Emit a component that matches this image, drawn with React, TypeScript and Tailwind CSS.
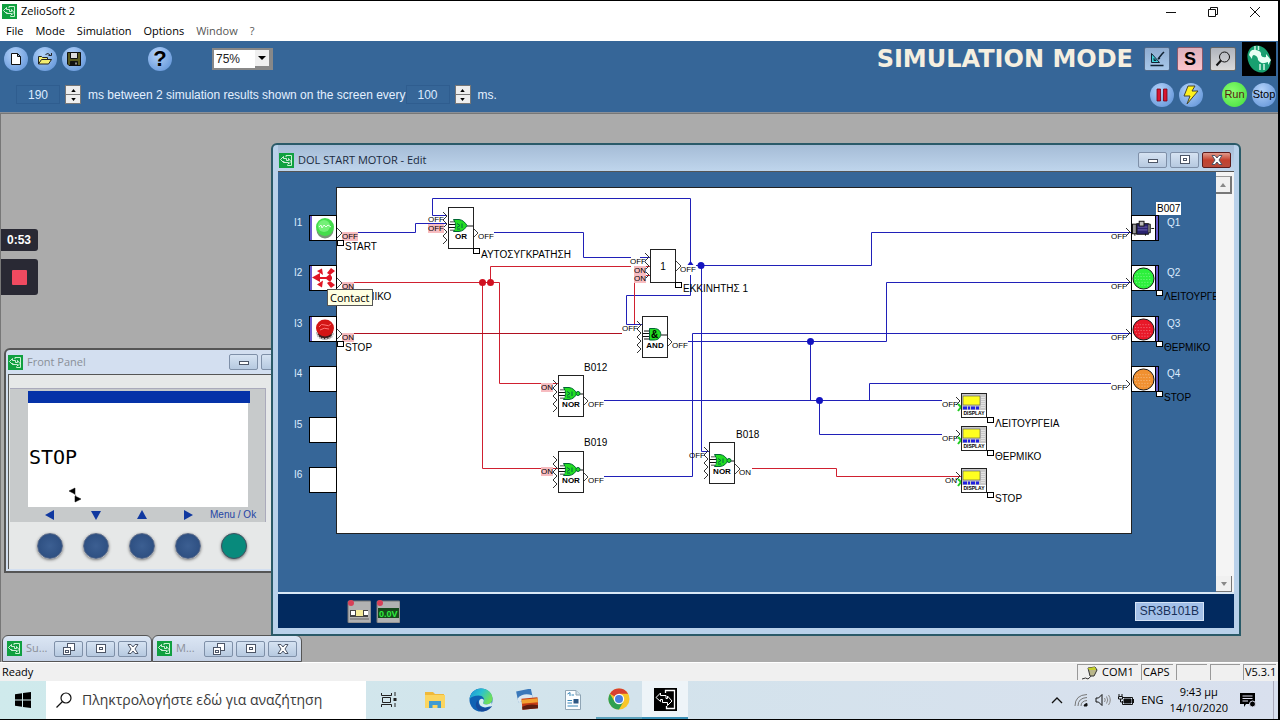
import type { ReactNode } from "react";

const uiFont = "font-['Open_Sans','Noto_Sans',sans-serif]";
const arial = "font-['Liberation_Sans',Arial,sans-serif]";

function Logo() {
  return (
    <svg viewBox="0 0 15 15" className="size-[15px] shrink-0" aria-hidden="true">
      <rect width="15" height="15" fill="#10a040" />
      <path d="M7 4V2.500H12.500V12.500H8.500V11.500" fill="none" stroke="#c8f5d0" strokeWidth="1" />
      <path d="M1.500 6.500L4.500 3.500V5.500H7.500V7.500H9.500V5.500L12 8.500L9.500 11V9.500H5V8.500H4.500V9.500Z" fill="none" stroke="#fff" strokeWidth=".8" />
    </svg>
  );
}

function RoundButton({ label, children, green = false }: { label: string; children: ReactNode; green?: boolean }) {
  return (
    <button
      type="button"
      aria-label={label}
      className={
        green
          ? "flex size-[25px] shrink-0 items-center justify-center rounded-full bg-radial-[at_40%_40%] from-[#8dff70] to-[#3fdc3c] text-[11px] text-[#5a1a10]"
          : "flex size-6 shrink-0 items-center justify-center rounded-full bg-radial-[at_40%_30%] from-[#b4d3fa] to-[#568cd4] text-[11px] text-black"
      }
    >
      {children}
    </button>
  );
}

function Spinner({ label, value }: { label: string; value: string }) {
  return (
    <div className="flex items-center gap-[5px]">
      <input
        aria-label={label}
        defaultValue={value}
        className="h-[19px] w-11 border border-[#2f5d8f] bg-transparent text-center text-xs text-[#dcebff]"
      />
      <span className="flex h-[19px] w-4 flex-col border border-[#777] bg-[#eee]">
        <button type="button" aria-label={`Increase ${label}`} className="flex flex-1 items-center justify-center border-b border-[#777]">
          <svg viewBox="0 0 6 4" className="h-[3px] w-[5px]"><path d="M0 4L3 0L6 4Z" /></svg>
        </button>
        <button type="button" aria-label={`Decrease ${label}`} className="flex flex-1 items-center justify-center">
          <svg viewBox="0 0 6 4" className="h-[3px] w-[5px]"><path d="M0 0L3 4L6 0Z" /></svg>
        </button>
      </span>
    </div>
  );
}

function CaptionIcon({ kind }: { kind: "min" | "max" | "close" | "restore" }) {
  return (
    <svg viewBox="0 0 12 12" className="size-3" fill="#fff" stroke="#4c5566" strokeWidth="1" aria-hidden="true">
      {kind === "min" && <rect x="1.500" y="5.500" width="9" height="3" />}
      {kind === "max" && (
        <>
          <rect x="1.500" y="1.500" width="9" height="8" />
          <rect x="4.500" y="4.500" width="3" height="2" />
        </>
      )}
      {kind === "restore" && (
        <>
          <rect x="4.500" y="0.500" width="7" height="7" />
          <rect x="0.500" y="4.500" width="7" height="7" />
          <rect x="2.500" y="7.500" width="3" height="2" />
        </>
      )}
      {kind === "close" && <path d="M1 1.500H4L6 4L8 1.500H11L8 6L11 10.500H8L6 8L4 10.500H1L4 6Z" />}
    </svg>
  );
}

function CaptionButton({ kind, red = false }: { kind: "min" | "max" | "close" | "restore"; red?: boolean }) {
  return (
    <button
      type="button"
      aria-label={kind}
      className={
        red
          ? "flex h-4 w-[29px] items-center justify-center rounded-[2px] border border-[#5c1a1a] bg-linear-to-b from-[#e09a8c] via-[#c4402c] to-[#b84a3a]"
          : "flex h-4 w-[29px] items-center justify-center rounded-[2px] border border-[#7f90a8] bg-linear-to-b from-[#d6e3f2] to-[#b6c9e0]"
      }
    >
      <CaptionIcon kind={kind} />
    </button>
  );
}

/* The schematic uses sheet units; the origin of the viewport sits at ORIGIN. */
const ORIGIN = { x: 278, y: 172 };
const place = (x: number, y: number) => ({ left: x - ORIGIN.x, top: y - ORIGIN.y });

const BLUE = "#2020b8";
const RED = "#d02030";

const wires: { d: string; c: string }[] = [
  { c: BLUE, d: "M358 232.500H415.500V223.500H447" },
  { c: BLUE, d: "M447 215.500H432.500V198.500H690.500V264" },
  { c: BLUE, d: "M690.500 275V295.500H626.500V324.500H642" },
  { c: BLUE, d: "M494 232.500H583.500V257.500H631M640 257.500H650" },
  { c: RED, d: "M354 282.500H499.500V383.500H542M550 383.500H558" },
  { c: RED, d: "M482.500 282.500V468.500H558" },
  { c: RED, d: "M490.500 282.500V266.500H631M646 266.500H650" },
  { c: "#b01020", d: "M354 333.500H622" },
  { c: RED, d: "M634.500 324V275.500H650" },
  { c: BLUE, d: "M696 265.500H871.500V232.500H1131" },
  { c: BLUE, d: "M701.500 265.500V451.500H709" },
  { c: BLUE, d: "M688 341.500H886.500V282.500H1131" },
  { c: BLUE, d: "M810.500 341.500V400.500" },
  { c: BLUE, d: "M604 400.500H942" },
  { c: BLUE, d: "M819.500 400.500V434.500H942" },
  { c: BLUE, d: "M869.500 400.500V383.500H1111" },
  { c: BLUE, d: "M604 476.500H692.500V333.500H1131" },
  { c: RED, d: "M752 468.500H836.500V476.500H961" },
];

const dots = [
  { x: 482.5, y: 282.5, c: "#d01020" },
  { x: 490.5, y: 282.5, c: "#d01020" },
  { x: 701, y: 265.5, c: "#1414c0" },
  { x: 810.5, y: 341.5, c: "#1414c0" },
  { x: 819.5, y: 400.5, c: "#1414c0" },
];

const arrowsIn: [number, number][] = [
  [448, 216], [448, 224], [448, 232], [448, 240],
  [650, 257], [650, 266], [650, 275],
  [642, 325], [642, 333], [642, 341], [642, 349],
  [558, 384], [558, 392], [558, 400], [558, 408],
  [558, 460], [558, 468], [558, 476], [558, 484],
  [709, 451], [709, 459], [709, 467], [709, 475],
  [961, 401], [961, 434], [961, 476],
  [1131, 232], [1131, 282], [1131, 333], [1131, 384],
];

const arrowsOut: [number, number][] = [
  [337, 232], [337, 282], [337, 333],
  [473, 232], [676, 265], [667, 341], [583, 400], [583, 476], [735, 468],
];

const states: { x: number; y: number; t: "OFF" | "ON"; hot?: boolean }[] = [
  { x: 342, y: 232, t: "OFF", hot: true },
  { x: 342, y: 282, t: "ON", hot: true },
  { x: 342, y: 333, t: "ON", hot: true },
  { x: 428, y: 215, t: "OFF" },
  { x: 428, y: 224, t: "OFF", hot: true },
  { x: 478, y: 232, t: "OFF" },
  { x: 630, y: 257, t: "OFF" },
  { x: 634, y: 266, t: "ON", hot: true },
  { x: 634, y: 274, t: "ON", hot: true },
  { x: 680, y: 265, t: "OFF" },
  { x: 622, y: 324, t: "OFF" },
  { x: 672, y: 341, t: "OFF" },
  { x: 541, y: 383, t: "ON", hot: true },
  { x: 588, y: 400, t: "OFF" },
  { x: 541, y: 467, t: "ON", hot: true },
  { x: 588, y: 476, t: "OFF" },
  { x: 689, y: 451, t: "OFF" },
  { x: 739, y: 468, t: "ON" },
  { x: 942, y: 400, t: "OFF" },
  { x: 942, y: 434, t: "OFF" },
  { x: 945, y: 476, t: "ON" },
  { x: 1111, y: 232, t: "OFF" },
  { x: 1111, y: 282, t: "OFF" },
  { x: 1111, y: 333, t: "OFF" },
  { x: 1111, y: 383, t: "OFF" },
];

const comments = [
  { x: 345, y: 242, t: "START" },
  { x: 345, y: 292, t: "ΘΕΡΜΙΚΟ" },
  { x: 345, y: 343, t: "STOP" },
  { x: 481, y: 250, t: "ΑΥΤΟΣΥΓΚΡΑΤΗΣΗ" },
  { x: 683, y: 284, t: "ΕΚΚΙΝΗΤΗΣ 1" },
  { x: 995, y: 419, t: "ΛΕΙΤΟΥΡΓΕΙΑ" },
  { x: 995, y: 452, t: "ΘΕΡΜΙΚΟ" },
  { x: 995, y: 494, t: "STOP" },
  { x: 1164, y: 292, t: "ΛΕΙΤΟΥΡΓΕΙΑ" },
  { x: 1164, y: 343, t: "ΘΕΡΜΙΚΟ" },
  { x: 1164, y: 393, t: "STOP" },
];

const blockNames = [
  { x: 584, y: 363, t: "B012" },
  { x: 584, y: 438, t: "B019" },
  { x: 736, y: 430, t: "B018" },
];

const gates = [
  { x: 448, y: 207, t: "OR" },
  { x: 642, y: 316, t: "AND" },
  { x: 558, y: 375, t: "NOR" },
  { x: 558, y: 451, t: "NOR" },
  { x: 709, y: 442, t: "NOR" },
];

function Gate({ x, y, t }: { x: number; y: number; t: string }) {
  return (
    <div
      className="absolute flex h-[42px] w-[26px] flex-col items-center border border-[#222] bg-white pt-[10px] text-[8px] leading-[10px] font-bold text-black"
      style={place(x, y)}
    >
      <svg viewBox="0 0 24 14" className="h-[14px] w-6 shrink-0" aria-hidden="true">
        <path d="M1 4H7M0 6.500H7M0 9.500H7M1 12H7M18 8H24" stroke="#111" />
        {t === "AND" && (
          <>
            <path d="M6.500 1.500H11C20 1.500 20 13 11 13H6.500Z" fill="#22dd22" stroke="#063" />
            <text x="8" y="11" fontSize="10" fontWeight="700">&amp;</text>
          </>
        )}
        {t !== "AND" && (
          <>
            <path d="M4.500 1.500H10C14 2 16 4.500 18 7.500C16 11 14 13 10 13.500H4.500C7 9.500 7 5.500 4.500 1.500Z" fill="#22dd22" stroke="#063" />
            <path d="M1 5H6M1 8H6M1 11H6" stroke="#fff" />
            <path d="M8 5.500L11 7.500L8 9.500M8 11H11M13 5.500V10" fill="none" stroke="#064" />
            {t === "NOR" && <circle cx="19" cy="7.500" r="2" fill="#22dd22" stroke="#063" />}
          </>
        )}
      </svg>
      <span>{t}</span>
    </div>
  );
}

function DisplayBlock({ x, y }: { x: number; y: number }) {
  return (
    <div className="absolute h-[25px] w-[26px] overflow-hidden border border-[#222] bg-white" style={place(x, y)}>
      <svg viewBox="0 0 24 16" className="block h-4 w-6" aria-hidden="true">
        <rect width="24" height="16" fill="#c8c8c8" />
        <rect x="1" y="2" width="17" height="9" fill="#ffff20" stroke="#555" strokeWidth=".6" />
        <path d="M1 14H5M6 14H8M9 14H13M14 14H17" stroke="#2020e0" strokeWidth="3" />
        <path d="M20 3V14M22 3V14" stroke="#fff" strokeDasharray="1 1" />
      </svg>
      <span className="block text-center text-[5px] leading-[7px] font-bold text-black">DISPLAY</span>
    </div>
  );
}

function StartLamp() {
  return (
    <svg viewBox="0 0 22 22" className="size-[22px]" aria-hidden="true">
      <ellipse cx="11" cy="13" rx="8.500" ry="8.500" fill="#789478" />
      <circle cx="11" cy="10" r="9" fill="#45dd4c" />
      <circle cx="10" cy="9" r="6" fill="#74f078" />
      <path d="M5 10L7 8L8 11L10 8L12 10L14 8L17 10" stroke="#e8ffe8" fill="none" />
    </svg>
  );
}

function ContactSymbol() {
  return (
    <svg viewBox="0 0 24 22" className="h-[22px] w-6" fill="#e01525" aria-hidden="true">
      <path d="M0 10.500L8 6V15Z M5 4L10 1.500L11 8Z M5 17.500L10 20.500L11 13.500Z M7 10H17V12H7Z M13 11L18 7L20 10V12L18 15Z M15 6L19 1L23 4L18 8Z M15 16L19 21L23 18L18 14Z" />
    </svg>
  );
}

function StopLamp() {
  return (
    <svg viewBox="0 0 22 22" className="size-[22px]" aria-hidden="true">
      <ellipse cx="11" cy="14" rx="8" ry="7.500" fill="#3a2020" />
      <path d="M3 14Q3 21 11 21T19 14" fill="none" stroke="#bbb" strokeWidth="2" strokeDasharray="2 1" />
      <ellipse cx="11" cy="10" rx="9" ry="8.500" fill="#d31616" />
      <path d="M5 9Q7 5 11 7T17 6M6 12Q10 9 15 11" stroke="#f77" fill="none" />
    </svg>
  );
}

function MotorSymbol() {
  return (
    <svg viewBox="0 0 24 22" className="h-[22px] w-6" aria-hidden="true">
      <rect x="0.500" y="7" width="4" height="10" fill="#999" stroke="#111" />
      <rect x="5" y="6.500" width="12" height="11" fill="#2a2470" stroke="#111" />
      <path d="M6 10H16M6 13H16" stroke="#776ab8" />
      <rect x="7.500" y="4" width="5" height="5" fill="#bbb" stroke="#111" />
      <path d="M17 7H19V16H17M20 11.500H23M3 17V19M14 17V19" stroke="#111" fill="#888" />
    </svg>
  );
}

function LampSymbol({ color }: { color: string }) {
  return (
    <svg viewBox="0 0 24 24" className="h-[23px] w-[23px]" aria-hidden="true">
      <circle cx="12" cy="12" r="11" fill={color} stroke="#111" />
      <path d="M5 7H19M3 10H21M3 13H21M4 16H20M7 19H17" stroke="#fff" strokeOpacity=".45" strokeDasharray="1 2" />
    </svg>
  );
}

const inputs: { n: string; y: number; icon?: ReactNode }[] = [
  { n: "I1", y: 215, icon: <StartLamp /> },
  { n: "I2", y: 265, icon: <ContactSymbol /> },
  { n: "I3", y: 316, icon: <StopLamp /> },
  { n: "I4", y: 366 },
  { n: "I5", y: 417 },
  { n: "I6", y: 467 },
];

const outputs: { n: string; y: number; icon: ReactNode }[] = [
  { n: "Q1", y: 215, icon: <MotorSymbol /> },
  { n: "Q2", y: 265, icon: <LampSymbol color="#2cf03c" /> },
  { n: "Q3", y: 316, icon: <LampSymbol color="#e81828" /> },
  { n: "Q4", y: 366, icon: <LampSymbol color="#f09030" /> },
];

function Schematic() {
  return (
    <div className={`relative flex-1 overflow-hidden bg-[#366698] text-black ${arial}`}>
      <div className="absolute top-[15px] left-[58px] h-[347px] w-[796px] border border-[#222] bg-white" />
      {inputs.map((p) => (
        <div key={p.n} className="absolute flex items-start gap-[7px]" style={place(294, p.y)}>
          <span className="w-2 pt-[3px] text-[10px] leading-[10px] whitespace-nowrap text-[#dcecff]">{p.n}</span>
          <span className="flex h-[26px] w-7 items-center justify-end border border-black bg-white">
            {p.icon && <span className="mr-auto h-full w-[2px] shrink-0 bg-[#6a5acd]" />}
            {p.icon}
          </span>
        </div>
      ))}
      {outputs.map((p) => (
        <div key={p.n} className="absolute flex items-start gap-2" style={place(1131, p.y)}>
          <span className="flex h-[26px] w-7 items-center border border-black bg-white">
            {p.icon}
            <span className="ml-auto h-full w-[3px] border-l border-black bg-[#6a5acd]" />
          </span>
          <span className="pt-[3px] text-[10px] leading-[10px] text-[#dcecff]">{p.n}</span>
        </div>
      ))}
      <svg viewBox="278 172 938 421" className="absolute top-0 left-0 h-[421px] w-[938px]" fill="none" aria-hidden="true">
        {wires.map((w) => (
          <path key={w.d} d={w.d} stroke={w.c} />
        ))}
        {dots.map((d) => (
          <circle key={`${d.x}`} cx={d.x} cy={d.y} r="3.500" fill={d.c} />
        ))}
        <path d="M687.500 265L690.500 261L693.500 265Z" fill="#1414c0" />
        {arrowsIn.map(([x, y]) => (
          <path key={`${x}-${y}`} d={`M${x - 5} ${y - 4}L${x - 1} ${y}L${x - 5} ${y + 4}`} stroke="#333" />
        ))}
        {arrowsOut.map(([x, y]) => (
          <path key={`${x}-${y}`} d={`M${x} ${y - 4}L${x + 5} ${y + 1}L${x} ${y + 6}`} stroke="#444" />
        ))}
        {[401, 434, 476].map((y) => (
          <path key={y} d={`M958 ${y + 3}L961 ${y + 6}L958 ${y + 10}`} stroke="#22cc22" strokeWidth="2" />
        ))}
      </svg>
      {states.map((s) => (
        <span
          key={`${s.x}-${s.y}`}
          className={
            s.hot
              ? "absolute bg-[#f7bcc0] pt-px text-[8px] leading-[8px]"
              : "absolute pt-px text-[8px] leading-[8px]"
          }
          style={place(s.x, s.y)}
        >
          {s.t}
        </span>
      ))}
      {gates.map((g) => (
        <Gate key={`${g.x}-${g.y}`} {...g} />
      ))}
      <div
        className="absolute flex h-[34px] w-[26px] items-center justify-center border border-[#222] bg-white text-[10px]"
        style={place(650, 249)}
      >
        1
      </div>
      {[393, 426, 468].map((y) => (
        <DisplayBlock key={y} x={961} y={y} />
      ))}
      {comments.map((c) => (
        <span key={`${c.x}-${c.y}`}>
          <span className="absolute h-[6px] w-[7px] border border-black bg-white" style={place(c.x - 8, c.y - 2)} />
          <span className="absolute text-[10px] leading-[10px] whitespace-nowrap" style={place(c.x, c.y)}>
            {c.t}
          </span>
        </span>
      ))}
      {blockNames.map((b) => (
        <span key={b.t + b.y} className="absolute text-[10px] leading-[10px]" style={place(b.x, b.y)}>
          {b.t}
        </span>
      ))}
      <span className="absolute bg-white px-px py-px text-[10px] leading-[11px]" style={place(1156, 202)}>
        B007
      </span>
      <span
        role="tooltip"
        className={`absolute border border-[#555] bg-[#ffffe1] px-0.5 text-[11px] leading-[15px] ${uiFont}`}
        style={place(327, 289)}
      >
        Contact
      </span>
    </div>
  );
}

function EditWindow() {
  return (
    <section className="absolute top-[29px] right-[37px] bottom-[26px] left-[270px] flex flex-col rounded-t-md border-2 border-[#2a5a68] bg-[#b9d1ea] px-[5px] pb-[6px]">
      <header className="flex h-[26px] shrink-0 items-center bg-linear-to-b from-[#a5bcd6] to-[#bfd5ec] pt-1">
        <div className="flex flex-1 items-center gap-1 pl-px">
          <Logo />
          <h2 className={`text-[11px] text-[#1a2a40] ${uiFont}`}>DOL START MOTOR - Edit</h2>
        </div>
        <div className="flex gap-[3px] pr-[3px]">
          <CaptionButton kind="min" />
          <CaptionButton kind="max" />
          <CaptionButton kind="close" red />
        </div>
      </header>
      <div className="flex min-h-0 flex-1 border-t border-[#555]">
        <Schematic />
        <div className="flex w-[18px] flex-col justify-between bg-[#f4f4f4] pt-1">
          <button type="button" aria-label="Scroll up" className="flex h-[18px] w-4 items-center justify-center border-t border-r-2 border-b-2 border-[#777] border-t-[#999] bg-[#f0f0f0]">
            <svg viewBox="0 0 6 4" className="h-1 w-1.5" fill="#888"><path d="M0 4L3 0L6 4Z" /></svg>
          </button>
          <button type="button" aria-label="Scroll down" className="flex h-4 w-4 items-center justify-center border-r border-b border-[#777] bg-[#f0f0f0]">
            <svg viewBox="0 0 6 4" className="h-1 w-1.5" fill="#888"><path d="M0 0L3 4L6 0Z" /></svg>
          </button>
        </div>
      </div>
      <footer className={`flex h-9 shrink-0 items-center justify-between border-t-2 border-[#d9e8f6] bg-[#022a5f] pr-[30px] pl-[69px] ${arial}`}>
        <div className="flex gap-[5px]">
          <button type="button" aria-label="Show contacts">
            <svg viewBox="0 0 24 24" className="size-6">
              <rect x="1" y="2" width="23" height="22" rx="1" fill="#b2b2b2" stroke="#777" />
              <rect x="3" y="11" width="18" height="7" fill="#444" />
              <rect x="4" y="12" width="4" height="4" fill="#fff" />
              <rect x="9" y="11" width="7" height="6" fill="#f4eb9a" />
              <rect x="17" y="12" width="4" height="4" fill="#fff" />
              <path d="M3 20H22" stroke="#666" />
              <circle cx="4" cy="4" r="3" fill="#d84058" />
            </svg>
          </button>
          <button type="button" aria-label="Show values">
            <svg viewBox="0 0 24 24" className="size-6">
              <rect x="1" y="2" width="23" height="22" rx="1" fill="#b2b2b2" stroke="#777" />
              <rect x="2" y="9" width="21" height="10" fill="#164a1c" />
              <text x="3" y="18" fontSize="9" fontWeight="700" fill="#30ee40">0.0V</text>
              <circle cx="4" cy="4" r="3" fill="#d84058" />
            </svg>
          </button>
        </div>
        <span className="border border-[#d5e4f7] bg-[#a3c0e8] px-1 text-xs leading-[17px] text-[#183058]">SR3B101B</span>
      </footer>
    </section>
  );
}

function FrontPanel() {
  const arrows = ["M9 0V10L0 5Z", "M0 1H10L5 10Z", "M0 9H10L5 0Z", "M1 0V10L10 5Z"];
  return (
    <section className="absolute top-[234px] left-[3px] flex h-[225px] w-[330px] flex-col rounded-t-md border-2 border-[#555] bg-[#d3dff0] pr-1 pb-0.5 pl-0.5">
      <header className="flex h-6 shrink-0 items-center">
        <Logo />
        <h2 className={`w-[206px] pl-1 text-[11px] text-[#8a8f98] ${uiFont}`}>Front Panel</h2>
        <div className="flex gap-[3px]">
          <CaptionButton kind="min" />
          <CaptionButton kind="max" />
          <CaptionButton kind="close" />
        </div>
      </header>
      <div className="flex flex-1 flex-col border-t border-l border-[#555] bg-[#e6e8e8] pt-[13px] pl-px">
        <div className="flex h-[134px] w-[256px] flex-col border-t border-r border-[#aab] bg-[#c7cacb] pt-[2px] pl-[18px]">
          <div className="h-3 w-[222px] bg-[#0532a8]" />
          <div className="h-[104px] w-[220px] bg-white pt-[42px] pl-px text-black">
            <p className="font-['DejaVu_Sans_Mono',monospace] text-[20px] leading-6">STOP</p>
            <svg viewBox="0 0 12 16" className="mt-[18px] ml-10 h-4 w-3" aria-hidden="true">
              <path d="M6 1V7L0 4ZM6 9V15L12 12ZM5 6L7 9" stroke="#000" strokeWidth=".5" />
            </svg>
          </div>
          <div className="flex flex-1 items-center">
            <div className="flex w-[182px] gap-9 pl-[17px]">
              {arrows.map((d) => (
                <svg key={d} viewBox="0 0 10 10" className="size-[10px] shrink-0" fill="#1038a0"><path d={d} /></svg>
              ))}
            </div>
            <span className={`text-[10px] leading-3 whitespace-nowrap text-[#2444a4] ${arial}`}>Menu / Ok</span>
          </div>
        </div>
        <div className="flex gap-5 pt-[11px] pl-[27px]">
          {["Left", "Down", "Up", "Right"].map((n) => (
            <button key={n} type="button" aria-label={n} className="size-[26px] rounded-full border border-[#5a6a88] bg-radial from-[#3c5f92] to-[#294a7c] shadow-[0_1px_3px_#777]" />
          ))}
          <button type="button" aria-label="Menu / Ok" className="size-[26px] rounded-full border border-[#405060] bg-[#088a7c] shadow-[0_1px_3px_#777]" />
        </div>
      </div>
    </section>
  );
}

function MinimizedWindow({ title }: { title: string }) {
  return (
    <section className="flex h-[27px] w-[150px] items-center rounded-t-md border border-[#555] bg-linear-to-b from-[#dbe6f4] to-[#c3d0e4] pr-1 pl-1">
      <Logo />
      <h2 className={`flex-1 pl-1 text-[11px] text-[#8a8f98] ${uiFont}`}>{title}</h2>
      <div className="flex gap-[3px]">
        <CaptionButton kind="restore" />
        <CaptionButton kind="max" />
        <CaptionButton kind="close" />
      </div>
    </section>
  );
}

function Toolbar() {
  return (
    <div className={`flex flex-col border-b border-[#8a9098] bg-[#366698] ${arial}`}>
      <div className="flex h-9 items-center justify-between pr-[2px] pl-1">
        <div className="flex items-center">
          <div className="flex gap-[5px]">
            <RoundButton label="New">
              <svg viewBox="0 0 16 16" className="size-4" fill="#fff" stroke="#111"><path d="M3.500 2.500H9.500L12.500 5.500V13.500H3.500ZM9.500 2.500V5.500H12.500" /></svg>
            </RoundButton>
            <RoundButton label="Open">
              <svg viewBox="0 0 16 16" className="size-4" fill="#f3ed70" stroke="#222"><path d="M1.500 13V5.500H4.500L5.500 6.500H10.500V8.500M1.500 13L4.500 8.500H14.500L11.500 13Z" /><path d="M8.500 3.500Q11 1 13.500 4.500M11.500 4.500H14.500V2" fill="none" /></svg>
            </RoundButton>
            <RoundButton label="Save">
              <svg viewBox="0 0 16 16" className="size-4" stroke="#111"><path d="M1.500 1.500H14.500V14.500H3L1.500 13Z" fill="#5a5a20" /><path d="M4.500 1.500H11.500V7.500H4.500Z" fill="#ddd" /><path d="M4.500 10.500H11.500V14.500H4.500Z" fill="#111" /><path d="M9.500 11.500H10.500V13.500H9.500Z" fill="#fff" stroke="none" /></svg>
            </RoundButton>
          </div>
          <div className="mr-10 ml-[62px]">
            <RoundButton label="Help"><b className="text-[22px] leading-6">?</b></RoundButton>
          </div>
          <div className="relative flex">
            <select aria-label="Zoom" defaultValue="75%" className="h-[22px] w-[61px] appearance-none border-2 border-[#888] bg-white pl-0.5 text-xs text-[#222]">
              <option>75%</option>
              <option>100%</option>
            </select>
            <span className="pointer-events-none absolute inset-y-[2px] right-[2px] flex w-4 items-center justify-center border-r-2 border-b-2 border-[#888] bg-[#efefef]">
              <svg viewBox="0 0 8 4" className="h-1 w-2"><path d="M0 0H8L4 4Z" /></svg>
            </span>
          </div>
        </div>
        <div className="flex items-center">
          <h1 className="pr-[11px] font-['DejaVu_Sans',sans-serif] text-[24px] leading-none font-bold text-[#f5efe0]">SIMULATION MODE</h1>
          <div className="flex gap-[7px] pr-[6px]">
            <button type="button" aria-label="Edit mode" className="flex h-6 w-[26px] items-center justify-center rounded-xs border border-[#506a8c] bg-linear-to-b from-[#8facd0] to-[#a8c8ea]">
              <svg viewBox="0 0 16 16" className="size-4" fill="#40d0d8" stroke="#123"><path d="M2.500 2.500V11.500H10.500ZM5 7.500V9.500H7Z" /><path d="M1.500 14.500H14.500M9 8L13 3L15 1M9 8L11 7" fill="none" strokeWidth="1.500" /></svg>
            </button>
            <button type="button" aria-label="Simulation mode" className="flex h-6 w-[26px] items-center justify-center rounded-xs border border-[#8a5a6c] bg-linear-to-b from-[#dcb0bc] to-[#fbc4cc] text-lg leading-none font-bold text-black">S</button>
            <button type="button" aria-label="Monitoring mode" className="flex h-6 w-[26px] items-center justify-center rounded-xs border border-[#666] bg-linear-to-b from-[#b0b4bc] to-[#dadada]">
              <svg viewBox="0 0 16 16" className="size-4" fill="none" stroke="#111"><circle cx="9.500" cy="6" r="5" /><path d="M6 9.500L1.500 14.500" strokeWidth="2" /></svg>
            </button>
          </div>
          <svg viewBox="0 0 34 34" className="size-[34px]" aria-hidden="true">
            <rect width="34" height="34" fill="#000" />
            <ellipse cx="17" cy="17" rx="11" ry="14" transform="rotate(-25 17 17)" fill="#18a070" />
            <path d="M7 13Q8 7 14 8Q20 9 19 13Q20 16 24 15V12L29 18L26 23V20Q19 23 16 18Q16 14 12 13Q10 13 10 17Z" fill="#e8fff4" />
            <path d="M13 4V8M16.500 4V8M18 22V28M22 22V28" stroke="#d0f5e4" strokeWidth="1.500" />
          </svg>
        </div>
      </div>
      <div className="flex h-[35px] items-center justify-between pr-[2px] pl-4 text-xs text-[#e4f0ff]">
        <div className="flex items-center">
          <Spinner label="period" value="190" />
          <span className="pl-[7px]">ms between 2 simulation results shown on the screen every</span>
          <Spinner label="refresh" value="100" />
          <span className="pl-[7px]">ms.</span>
        </div>
        <div className="flex items-center gap-[5px]">
          <RoundButton label="Pause">
            <svg viewBox="0 0 14 14" className="size-[14px]" fill="#d81530" stroke="#701" strokeWidth=".8"><path d="M2 1H5.500V13H2ZM8.500 1H12V13H8.500Z" /></svg>
          </RoundButton>
          <div className="mr-[14px]">
            <RoundButton label="Power">
              <svg viewBox="0 0 18 20" className="h-5 w-[18px]" fill="#fff21c" stroke="#443"><path d="M6 1H13L10 6H16L5 19L8 11H2Z" /></svg>
            </RoundButton>
          </div>
          <RoundButton label="Run" green>Run</RoundButton>
          <RoundButton label="Stop">Stop</RoundButton>
        </div>
      </div>
    </div>
  );
}

function StatusBar() {
  const cell = "flex h-4 items-center border-t border-l border-[#999]";
  return (
    <div className={`flex h-[19px] items-center justify-between border-t border-white bg-[#f0f0f0] pr-[2px] pl-0.5 text-[11px] text-black ${uiFont}`}>
      <span>Ready</span>
      <div className="flex gap-[3px]">
        <span className={`${cell} w-[61px] gap-1 pl-1`}>
          <svg viewBox="0 0 16 14" className="h-[14px] w-4" aria-hidden="true">
            <path d="M0 13Q4 11 6 13Q9 11 10 8" stroke="#333" fill="none" />
            <path d="M6 2L13 1L15 4L12 10H8Z" fill="#b9b68a" stroke="#333" />
            <path d="M6 2L13 1L14 4H7Z" fill="#c4d02a" />
          </svg>
          COM1
        </span>
        <span className={`${cell} w-8 pl-px`}>CAPS</span>
        <span className={`${cell} w-[31px]`} />
        <span className={`${cell} w-[30px]`} />
        <span className={`${cell} w-[33px] pl-px`}>V5.3.1</span>
      </div>
    </div>
  );
}

function TaskButton({ label, children, state = "" }: { label: string; children: ReactNode; state?: "" | "open" | "active" }) {
  return (
    <button
      type="button"
      aria-label={label}
      className={
        state === "active"
          ? "flex h-full w-[46px] items-center justify-center border-b-2 border-[#3a8fb5] bg-[#eef4f8]"
          : state === "open"
            ? "flex h-full w-[46px] items-center justify-center border-b-2 border-[#5aa0ba]"
            : "flex h-full w-[46px] items-center justify-center"
      }
    >
      {children}
    </button>
  );
}

function Taskbar() {
  return (
    <footer className={`flex h-[38px] items-center justify-between bg-linear-to-r from-[#cfeaec] via-[#d3e3ec] to-[#d9e0ee] text-black ${uiFont}`}>
      <div className="flex h-full items-center">
        <TaskButton label="Start">
          <svg viewBox="0 0 16 16" className="size-4"><path d="M0 2.200L7 1.200V7.500H0ZM8 1L16 0V7.500H8ZM0 8.500H7V14.800L0 13.800ZM8 8.500H16V16L8 15Z" /></svg>
        </TaskButton>
        <label className="flex h-full w-[320px] items-center gap-[10px] bg-white pl-[10px]">
          <svg viewBox="0 0 16 16" className="size-4" fill="none" stroke="#111" strokeWidth="1.200"><circle cx="10" cy="6" r="5" /><path d="M6.500 9.500L0.500 15.500" /></svg>
          <input aria-label="Αναζήτηση" placeholder="Πληκτρολογήστε εδώ για αναζήτηση" className="min-w-0 flex-1 text-sm placeholder:text-[#3a3a3a]" />
        </label>
        <TaskButton label="Task view">
          <svg viewBox="0 0 16 16" className="size-4" fill="none" stroke="#222"><path d="M0.500 1V3.500H10.500V1M0.500 15V12.500H10.500V15M1.500 5.500H9.500V10.500H1.500ZM14 0V4M14 11V15" /><path d="M14 6V9" strokeWidth="3" /></svg>
        </TaskButton>
        <TaskButton label="File explorer">
          <svg viewBox="0 0 22 20" className="h-5 w-[22px]"><path d="M1 2H9L11 4H20V18H1Z" fill="#f0b93a" /><path d="M1 5H21V18H1Z" fill="#fbd55f" /><path d="M5 18V11H17V18H13.500V15H8.500V18Z" fill="#3f9bd2" /></svg>
        </TaskButton>
        <TaskButton label="Edge">
          <svg viewBox="0 0 24 24" className="size-6">
            <defs>
              <linearGradient id="edgeTop" x1="0" y1="0" x2="1" y2=".5"><stop offset="0" stopColor="#1b8fd8" /><stop offset=".5" stopColor="#2ac0d0" /><stop offset="1" stopColor="#6fe05a" /></linearGradient>
            </defs>
            <circle cx="12" cy="12" r="11.500" fill="#0f62b4" />
            <path d="M0.600 11C1.500 4 6.500 0.500 12 0.500C19 0.500 23.500 5 23.500 10.500C23.500 14 21 16.500 17.500 16.500C14.500 16.500 13.500 15.300 14.500 14C16.500 11 14 7.500 9.500 7.500C5.500 7.500 2 9 0.600 11Z" fill="url(#edgeTop)" />
            <path d="M9 12C8 16 11 20 16 20C18.500 20 20.500 19.300 22 18.200C22.500 17.800 23 18.500 22.500 19C20 22 16.500 23.500 12.500 23.500C7 22 5 16 9 12Z" fill="#154a9c" />
            <path d="M14.500 14C13.500 15.300 14.500 16.500 17.500 16.500C19.500 16.500 21.500 15.500 22.500 14L23 18L16 19.500C12 19 10 17 10 14C10 12 11 11 13 10.800C14.800 11 15.300 12.500 14.500 14Z" fill="#d7eef0" />
          </svg>
        </TaskButton>
        <TaskButton label="Photos">
          <svg viewBox="0 0 22 22" className="size-[22px]"><g transform="rotate(-12 8 6)"><rect x="1" y="1" width="15" height="11" fill="#3a78ba" /><path d="M1 8Q8 3 16 8V12H1Z" fill="#dce8f0" /></g><g transform="rotate(-5 14 15)"><rect x="6" y="9" width="16" height="11" fill="#c43a14" /><rect x="6" y="10" width="16" height="4" fill="#f3a030" /><path d="M6 17Q14 14 22 17V20H6Z" fill="#5c1c10" /></g></svg>
        </TaskButton>
        <TaskButton label="Writer">
          <svg viewBox="0 0 18 22" className="h-[22px] w-[18px]"><path d="M1.500 1.500H12L16.500 6V20.500H1.500Z" fill="#fbfdff" stroke="#8fa5b5" /><path d="M12 1.500V6H16.500" fill="#cfe0ea" stroke="#8fa5b5" /><path d="M3.500 5L6 3.500V7M7.500 6H10M3.500 11.500H8M3.500 14H8M3.500 17H14" stroke="#3686b8" fill="none" /><rect x="9.500" y="10" width="5" height="4.500" fill="#2c5784" /></svg>
        </TaskButton>
        <TaskButton label="Chrome" state="open">
          <svg viewBox="0 0 22 22" className="size-[22px]"><circle cx="11" cy="11" r="10.500" fill="#f8c62a" /><path d="M11 11L1.900 5.700A10.500 10.500 0 0 1 20.100 5.750L11 5.800Z" fill="#d9402f" /><path d="M1.900 5.700A10.500 10.500 0 0 0 11 21.500L15.500 13.600L11 11L6.500 13.600Z" fill="#2fa052" /><circle cx="11" cy="11" r="5.200" fill="#fff" /><circle cx="11" cy="11" r="4" fill="#4a7ee0" /></svg>
        </TaskButton>
        <TaskButton label="ZelioSoft 2" state="active">
          <svg viewBox="0 0 23 23" className="size-[23px]"><rect width="23" height="23" fill="#000" /><path d="M11.500 5V2.500H20.500V20.500H12.500V18" fill="none" stroke="#fff" strokeWidth="1.300" /><path d="M2 9.500L6.500 5V7.500H12V10.500H13.500V8L18 13L13.500 17.500V14.500H8.500V11.500H6.500V13.500Z" fill="none" stroke="#fff" /></svg>
        </TaskButton>
      </div>
      <div className="flex h-full items-center text-xs">
        <svg viewBox="0 0 12 8" className="mr-[11px] h-2 w-3" fill="none" stroke="#111" strokeWidth="1.300"><path d="M1 7L6 2L11 7" /></svg>
        <svg viewBox="0 0 14 14" className="mr-[7px] size-[14px]" fill="none" stroke="#777"><path d="M1 13Q1 2 13 1.500M4 13Q4 5 13 4.500M7 13Q7 8 13 7.500" /><path d="M10 13Q10 11 13 10.500V13Z" fill="#111" stroke="#111" /></svg>
        <svg viewBox="0 0 16 14" className="mr-[7px] h-[14px] w-4" fill="none" stroke="#111"><path d="M1 5H3.500L7 1.500V12.500L3.500 9H1Z" /><path d="M9.500 5Q11 7 9.500 9M11.500 3.500Q14 7 11.500 10.500M13.500 2Q17 7 13.500 12" stroke="#888" /></svg>
        <svg viewBox="0 0 16 14" className="mr-[7px] h-[14px] w-4" fill="none" stroke="#111"><path d="M5 4.500H14.500V11.500H4.500V8" /><path d="M6 6H13V10H6Z" fill="#111" /><path d="M1 1V3M4 1V3M0.500 3.500H4.500V6H0.500ZM2.500 6V9H5M15.500 6V10" /></svg>
        <span className="mr-[6px] text-[11px]">ENG</span>
        <time className="mr-[12px] text-center text-[11px] leading-4">
          9:43 μμ
          <br />
          14/10/2020
        </time>
        <svg viewBox="0 0 16 16" className="mr-[17px] size-4" aria-hidden="true"><path d="M0 1H15V12H6L4 15V12H0Z" /><path d="M2.500 4H12.500M2.500 6.500H12.500M2.500 9H8" stroke="#dde" /><circle cx="12.500" cy="12" r="3" stroke="#dde" /></svg>
        <span className="mr-1 h-full w-px bg-[#aab]" />
      </div>
    </footer>
  );
}

export default function App() {
  return (
    <div className="flex min-h-screen flex-col border-t border-r-2 border-b border-black bg-white">
      <header className={`bg-white text-black ${uiFont}`}>
        <div className="flex h-[21px] items-center justify-between pr-[18px] pl-0.5">
          <div className="flex items-center gap-1">
            <Logo />
            <span className="text-[11px]">ZelioSoft 2</span>
          </div>
          <div className="flex items-center gap-8">
            <button type="button" aria-label="Minimize"><svg viewBox="0 0 10 10" className="size-[10px]" stroke="#111"><path d="M0 5.500H10" /></svg></button>
            <button type="button" aria-label="Restore"><svg viewBox="0 0 10 10" className="size-[10px]" stroke="#111" fill="none"><path d="M0.500 2.500H7.500V9.500H0.500ZM2.500 2.500V0.500H9.500V7.500H7.500" /></svg></button>
            <button type="button" aria-label="Close"><svg viewBox="0 0 10 10" className="size-[10px]" stroke="#111"><path d="M0 0L10 10M10 0L0 10" /></svg></button>
          </div>
        </div>
        <nav className="flex h-[19px] items-center gap-3 pl-[6px] text-[11px]">
          <button type="button">File</button>
          <button type="button">Mode</button>
          <button type="button">Simulation</button>
          <button type="button">Options</button>
          <button type="button" className="text-[#555]">Window</button>
          <button type="button" className="text-[#555]">?</button>
        </nav>
      </header>
      <Toolbar />
      <main className="relative min-h-[549px] flex-1 overflow-hidden border-t border-l border-[#777] bg-[#ababab]">
        <div className="absolute bottom-0 left-px flex">
          <MinimizedWindow title="Su..." />
          <MinimizedWindow title="M..." />
        </div>
        <FrontPanel />
        <EditWindow />
        <div className={`absolute top-[115px] -left-px flex flex-col gap-2 text-white ${arial}`}>
          <span className="rounded-r-[3px] bg-[#292934] px-[7px] text-xs leading-[22px] font-bold">0:53</span>
          <button type="button" aria-label="Stop recording" className="flex h-9 w-[38px] items-center justify-center rounded-r-[3px] bg-[#292934]">
            <span className="size-[15px] rounded-[1px] bg-[#f04a60]" />
          </button>
        </div>
      </main>
      <StatusBar />
      <Taskbar />
    </div>
  );
}
